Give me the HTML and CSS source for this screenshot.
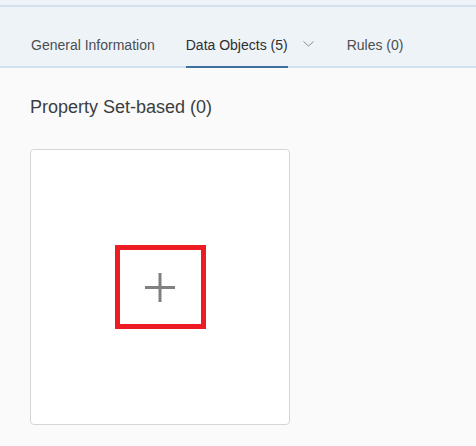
FILE: index.html
```html
<!DOCTYPE html>
<html>
<head>
<meta charset="utf-8">
<link rel="stylesheet" href="styles.css">
</head>
<body>
<div class="page">
  <div class="topline"></div>
  <div class="tabbar">
    <div class="tab">General Information</div>
    <div class="tab tab-selected">Data Objects (5)</div>
    <div class="tab-chevron">
      <svg width="11" height="6" viewBox="0 0 11 6"><path d="M0.5 0.5 L5.5 5 L10.5 0.5" fill="none" stroke="#8a8d90" stroke-width="1"/></svg>
    </div>
    <div class="tab">Rules (0)</div>
  </div>
  <div class="content">
    <h2 class="section-title">Property Set-based (0)</h2>
    <div class="card">
      <div class="add-box">
        <svg width="30" height="29" viewBox="0 0 30 29"><path d="M15 0 V29 M0 14.5 H30" stroke="#808080" stroke-width="3" fill="none"/></svg>
      </div>
    </div>
  </div>
</div>
</body>
</html>
```

FILE: styles.css
```css
* { box-sizing: border-box; }
html, body {
  margin: 0;
  padding: 0;
  background: #fafafa;
  font-family: "Liberation Sans", Arial, sans-serif;
}
.page {
  width: 476px;
  height: 446px;
  overflow: hidden;
  background: #fafafa;
}
.topline {
  height: 7px;
  background: #eef3f8;
  border-bottom: 2px solid #d3e0ee;
}
.tabbar {
  display: flex;
  align-items: flex-end;
  height: 61px;
  background: #eef3f8;
  border-bottom: 2px solid #d3e0ee;
  padding-left: 31px;
}
.tab {
  font-size: 14px;
  line-height: 16px;
  color: #4a4e52;
  padding-bottom: 13px;
  margin-bottom: -2px;
  border-bottom: 2px solid transparent;
  margin-right: 31px;
  white-space: nowrap;
}
.tab-selected {
  color: #2c2f33;
  border-bottom-color: #3d6f9f;
  margin-right: 15px;
}
.tab-chevron {
  display: flex;
  height: 16px;
  align-items: center;
  margin-bottom: 13px;
  margin-right: 33px;
  padding-bottom: 2px;
}
.content {
  padding: 0 30px;
}
.section-title {
  margin: 28px 0 31px 0;
  font-size: 18px;
  line-height: 22px;
  font-weight: normal;
  color: #3a3e42;
}
.card {
  width: 260px;
  height: 276px;
  background: #ffffff;
  border: 1px solid #d6d6d6;
  border-radius: 4px;
  display: flex;
  align-items: center;
  justify-content: center;
}
.add-box {
  width: 91px;
  height: 84px;
  border: 5px solid #ed1c24;
  display: flex;
  align-items: center;
  justify-content: center;
}
```
